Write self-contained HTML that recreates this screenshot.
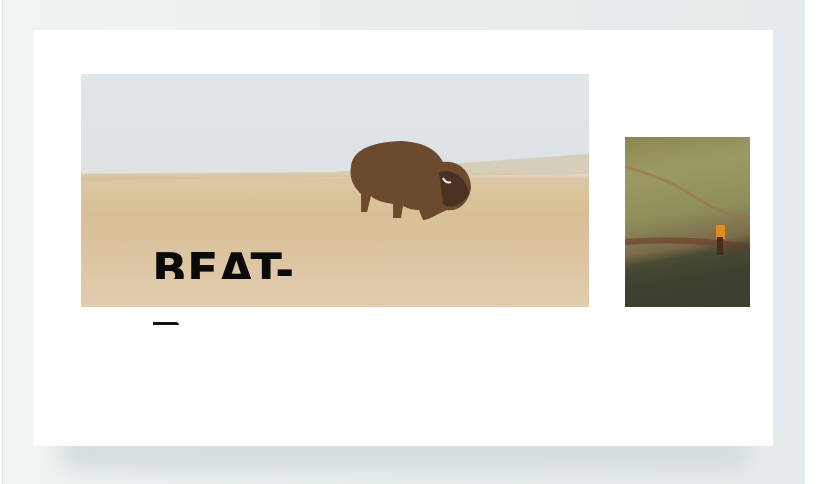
<!DOCTYPE html>
<html><head><meta charset="utf-8"><style>
html,body{margin:0;padding:0;width:836px;height:484px;overflow:hidden;background:#fff;font-family:"Liberation Sans",sans-serif}
.panel{position:absolute;left:2px;top:0;width:802px;height:484px;background:linear-gradient(90deg,#eef3f4 0%,#e8eeee 50%,#e5eaec 100%);border-left:1px solid #dde3e5}
.shadow{position:absolute;left:60px;top:430px;width:690px;height:40px;background:#d5dcdf;filter:blur(10px);border-radius:20px}
.card{position:absolute;left:33px;top:30px;width:740px;height:416px;background:#fff}
.img1{position:absolute;left:81px;top:74px;width:508px;height:233px;overflow:hidden;
background:linear-gradient(180deg,#dfe5e9 0%,#dce2e5 38%,#e2e3df 42%,#dac7a2 45%,#d8c096 60%,#dcc6a2 80%,#e0ccae 100%)}
.img2{position:absolute;left:625px;top:137px;width:125px;height:170px;overflow:hidden;
background:linear-gradient(170deg,#8a8650 0%,#9c9a64 20%,#8e8e5a 45%,#7a6a4a 62%,#4a4a32 68%,#3c4130 80%,#3a3f30 100%)}
.t1{position:absolute;left:152px;top:244px;font-size:46px;font-weight:900;letter-spacing:0px;color:#0a0a0a;height:35px;overflow:hidden;line-height:52px;font-family:"DejaVu Sans",sans-serif}
.t2{position:absolute;left:153px;top:322px;width:26px;height:6px;overflow:hidden}
</style></head><body>
<div class="panel"></div>
<div class="shadow"></div>
<div class="card"></div>
<div class="img1">
<svg width="508" height="233" style="position:absolute;left:0;top:0">
<path d="M0 100 L250 98 L508 80 L508 100 L0 106Z" fill="#cdb991" opacity=".5"/>
<g fill="#6b4a2e">
<path d="M270 92 C272 76 290 68 320 67 C340 68 355 74 362 88 C378 86 390 98 390 114 C388 128 378 138 366 136 C356 140 348 146 342 146 L338 136 C330 136 326 134 322 132 L320 144 L312 144 L312 130 C300 128 294 126 290 122 L286 138 L280 138 L280 120 C272 112 268 104 270 92Z"/>
</g>
<path d="M358 98 C372 94 386 104 388 120 C380 132 370 136 362 130Z" fill="#4a3220"/>
<path d="M362 104 q3 6 8 4" stroke="#eee" stroke-width="2" fill="none"/>
</svg>
</div>
<div class="t1">BEAT-</div>
<div class="t2"><div style="width:26px;height:3px;background:#111;border-radius:0 3px 0 0"></div></div>
<div class="img2">
<svg width="125" height="170" style="position:absolute;left:0;top:0">
<path d="M0 30 Q40 40 70 60 T125 80" stroke="#a36a4c" stroke-width="3" fill="none" opacity=".5"/>
<path d="M0 105 Q60 100 125 110" stroke="#6a3a26" stroke-width="6" fill="none" opacity=".6"/>
<rect x="91" y="88" width="9" height="14" fill="#e08a20"/>
<rect x="92" y="100" width="6" height="18" fill="#4a2a1a"/>
</svg>
</div>
</body></html>
